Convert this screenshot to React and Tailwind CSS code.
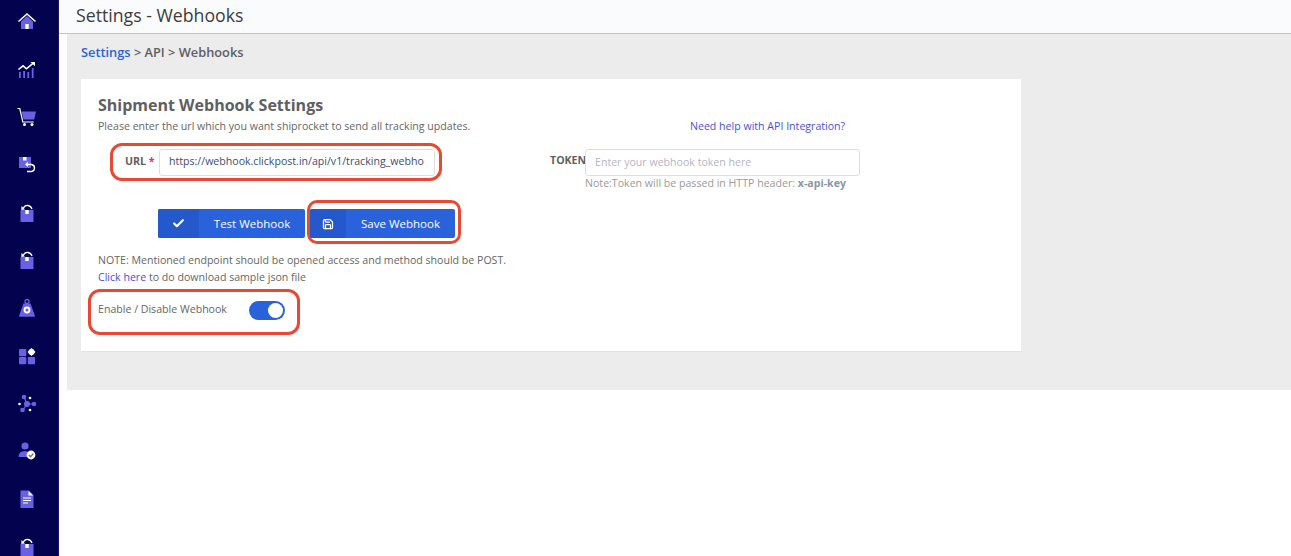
import React from "react";
import { Check, Save } from "lucide-react";

const P = "#6a60e2";
const W = "#ffffff";

function HomeIcon() {
  return (
    <svg viewBox="0 0 20 20" className="w-5 h-5">
      <path d="M4 9.500 10 4l6 5.500V17H4z" fill={P} />
      <path d="M1.500 9.500 10 2l8.500 7.500" fill="none" stroke={W} strokeWidth="1.600" />
      <rect x="8.300" y="12" width="3.400" height="5" fill={W} />
    </svg>
  );
}

function ChartIcon() {
  return (
    <svg viewBox="0 0 20 20" className="w-5 h-5">
      <path d="M2 12h1.800v6H2zM6.200 11h1.800v7H6.200zM10.400 12h1.800v6h-1.800zM14.800 8h1.800v10h-1.800z" fill={P} />
      <path d="M1.500 9.500 6 5.800l3.500 3 7-6" fill="none" stroke={W} strokeWidth="1.600" />
      <path d="M13.500 2h4.500v4.200z" fill={W} />
    </svg>
  );
}

function CartIcon() {
  return (
    <svg viewBox="0 0 20 20" className="w-5 h-5">
      <path d="M4.500 4.500H19l-1.800 8H6.500z" fill={P} />
      <path d="M0.500 1.500h2.300l3 13.500h11" fill="none" stroke={W} strokeWidth="1.200" />
      <circle cx="7.500" cy="17.500" r="1.500" fill={W} />
      <circle cx="15" cy="17.500" r="1.500" fill={W} />
    </svg>
  );
}

function BoxReturnIcon() {
  return (
    <svg viewBox="0 0 20 20" className="w-5 h-5">
      <rect x="2" y="2" width="12" height="11" fill={P} />
      <rect x="6" y="2" width="3.500" height="3.500" fill={W} />
      <path d="M11 6.500 8 9.500l3 2.500z" fill={W} />
      <path d="M10 9.500h4.500q3 .5 3 3.500t-3 3.500H10" fill="none" stroke={W} strokeWidth="1.400" />
    </svg>
  );
}

function BoxUpIcon() {
  return (
    <svg viewBox="0 0 20 20" className="w-5 h-5">
      <rect x="3.500" y="7" width="13" height="12" fill={P} />
      <rect x="8.300" y="7" width="3.400" height="4" fill={W} />
      <path d="M6 5.500Q8 2 11 2.500t4 3.500" fill="none" stroke={W} strokeWidth="1.300" />
      <path d="M4.500 3 4.300 7 8 6.500z" fill={W} />
    </svg>
  );
}

function WeightIcon() {
  return (
    <svg viewBox="0 0 20 20" className="w-5 h-5">
      <circle cx="10" cy="3.500" r="2" fill="none" stroke={P} strokeWidth="1.300" />
      <path d="M6.500 5.500h7l4.500 12.500q0 .8-1 .8H3q-1 0-1-.8z" fill={P} />
      <circle cx="10" cy="12" r="3.400" fill={W} />
      <circle cx="10" cy="12" r="1.500" fill={P} />
    </svg>
  );
}

function GridIcon() {
  return (
    <svg viewBox="0 0 20 20" className="w-5 h-5">
      <rect x="2" y="3" width="7.300" height="7.300" rx="1" fill={P} />
      <rect x="2" y="11" width="7.300" height="7.300" rx="1" fill={P} />
      <rect x="10.800" y="11" width="7.300" height="7.300" rx="1" fill={P} />
      <path d="M14.500 2 18.500 6 14.500 10 10.500 6z" fill={W} />
      <circle cx="14.500" cy="6" r="3" fill={W} />
    </svg>
  );
}

function NetworkIcon() {
  return (
    <svg viewBox="0 0 20 20" className="w-5 h-5">
      <path d="M10 10 7 3M10 10l8 0M10 10l-4 6" stroke={P} strokeWidth="1.200" />
      <circle cx="10" cy="10" r="3" fill={P} />
      <circle cx="7" cy="3" r="2.300" fill={P} />
      <circle cx="17" cy="10" r="2.300" fill={P} />
      <circle cx="5.500" cy="16" r="2.300" fill={P} />
      <circle cx="13" cy="4" r="1.300" fill={W} />
      <circle cx="2.500" cy="10" r="1.300" fill={W} />
      <circle cx="13" cy="16" r="1.300" fill={W} />
    </svg>
  );
}

function UserCheckIcon() {
  return (
    <svg viewBox="0 0 20 20" className="w-5 h-5">
      <circle cx="8" cy="5" r="3.600" fill={P} />
      <path d="M1.500 16q0-6 6.500-6 3 0 4 1.500l-1 4.500z" fill={P} />
      <circle cx="14" cy="14" r="4.400" fill={W} />
      <path d="m11.800 14 1.700 1.700 2.900-3.200" fill="none" stroke={P} strokeWidth="1.300" />
    </svg>
  );
}

function DocIcon() {
  return (
    <svg viewBox="0 0 20 20" className="w-5 h-5">
      <path d="M3.500 1.500H12l4.500 4.500v13h-13z" fill={P} />
      <path d="M11.500 2v4.500H16" fill={W} />
      <path d="M6 9h8M6 11.500h8M6 14h5" stroke={W} strokeWidth="1" />
    </svg>
  );
}

const navIcons = [
  HomeIcon,
  ChartIcon,
  CartIcon,
  BoxReturnIcon,
  BoxUpIcon,
  BoxUpIcon,
  WeightIcon,
  GridIcon,
  NetworkIcon,
  UserCheckIcon,
  DocIcon,
  BoxUpIcon,
];

function WebhookButton({ icon, label, widthClass, iconClass }) {
  return (
    <button className={`flex h-[29px] items-center overflow-hidden rounded-[2px] bg-[#2a62dc] text-[11.500px] font-medium text-white ${widthClass}`}>
      <span className={`flex h-full items-center justify-center bg-[#2558cb] ${iconClass}`}>{icon}</span>
      <span className="flex-1 text-center">{label}</span>
    </button>
  );
}

export default function App() {
  return (
    <div className="flex h-[556px] overflow-hidden bg-white font-['Open_Sans',sans-serif]">
      {/* Sidebar */}
      <aside className="flex w-[59px] shrink-0 flex-col gap-[27.700px] border-r border-[#1a1866] bg-[#03024f] pl-[17px] pt-[12px]">
        {navIcons.map((Icon, i) => (
          <div key={i} className="h-5 w-5 shrink-0">
            <Icon />
          </div>
        ))}
      </aside>

      <div className="min-w-0 flex-1">
        {/* Top bar */}
        <header className="flex h-[34px] items-center border-b border-[#c4c4c4] bg-[#fafbfd] pl-[17px] pb-[2px] text-[17.700px] text-[#3c3c3c]">
          Settings - Webhooks
        </header>

        <main className="ml-[8px] h-[356px] bg-[#ececec] pl-[14px] pt-[11px]">
          <div className="text-[12.800px] font-semibold leading-[15px] text-[#5f5f5f]">
            <span className="text-[#2a62dc]">Settings</span> &gt; API &gt; Webhooks
          </div>

          {/* Card */}
          <section className="mt-[19px] h-[273px] w-[940px] border-b border-[#e2e2e2] bg-white pl-[17px] pt-[15px]">
            <h2 className="text-[16px] font-bold leading-[22px] text-[#5f5f5f]">Shipment Webhook Settings</h2>
            <div className="mt-[3px] flex text-[10.600px] leading-[15px]">
              <p className="w-[592px] text-[#666666]">Please enter the url which you want shiprocket to send all tracking updates.</p>
              <a className="text-[#4b50d6]">Need help with API Integration?</a>
            </div>

            <div className="mt-[9px] flex">
              <div className="ml-[12px] flex h-[38px] w-[332px] items-center rounded-[12px] border-[3px] border-[#e64a35] pl-[12px]">
                <label className="w-[34px] shrink-0 text-[10.600px] font-bold text-[#5f5f5f]">
                  URL <span className="text-[#ec2f6b]">*</span>
                </label>
                <div className="flex h-[27px] w-[276px] items-center rounded-[3px] border border-[#dedede] pl-[9px] text-[10.600px] text-[#3f4d6b]">
                  https://webhook.clickpost.in/api/v1/tracking_webho
                </div>
              </div>

              <label className="ml-[108px] mt-[10px] w-[35px] shrink-0 text-[10.600px] leading-[15px] font-bold text-[#5f5f5f]">TOKEN</label>
              <div className="mt-[6px]">
                <div className="flex h-[27px] w-[275px] items-center rounded-[3px] border border-[#dedede] pl-[9px] text-[10.600px] text-[#b5b5c3]">
                  Enter your webhook token here
                </div>
                <p className="text-[10.600px] leading-[15px] text-[#9a9a9a]">
                  Note:Token will be passed in HTTP header: <b className="text-[#8b97a5]">x-api-key</b>
                </p>
              </div>
            </div>

            <div className="ml-[60px] mt-[9px] flex items-start">
              <div className="mt-[9px]">
                <WebhookButton
                  icon={<Check size={13} strokeWidth={4} />}
                  label="Test Webhook"
                  widthClass="w-[147px]"
                  iconClass="w-[41px]"
                />
              </div>
              <div className="ml-[2px] flex h-[44px] w-[154px] items-start rounded-[10px] border-[3px] border-[#e64a35] pt-[6px]">
                <WebhookButton
                  icon={<Save size={12} strokeWidth={2.500} />}
                  label="Save Webhook"
                  widthClass="w-[145px]"
                  iconClass="w-[36px]"
                />
              </div>
            </div>

            <p className="mt-[8px] text-[10.600px] leading-[17px] text-[#666666]">
              NOTE: Mentioned endpoint should be opened access and method should be POST.
              <br />
              <a className="text-[#4b50d6]">Click here</a> to do download sample json file
            </p>

            <div className="-ml-[10px] mt-[3px] flex h-[46px] w-[212px] items-center rounded-[12px] border-[3px] border-[#e64a35] pb-[4px] pl-[7px]">
              <span className="w-[151px] text-[10.600px] text-[#666666]">Enable / Disable Webhook</span>
              <span className="flex h-[19px] w-[36px] items-center justify-end rounded-full bg-[#2a62dc] pr-[2px]">
                <span className="h-[15px] w-[15px] rounded-full bg-white" />
              </span>
            </div>
          </section>
        </main>
      </div>
    </div>
  );
}
